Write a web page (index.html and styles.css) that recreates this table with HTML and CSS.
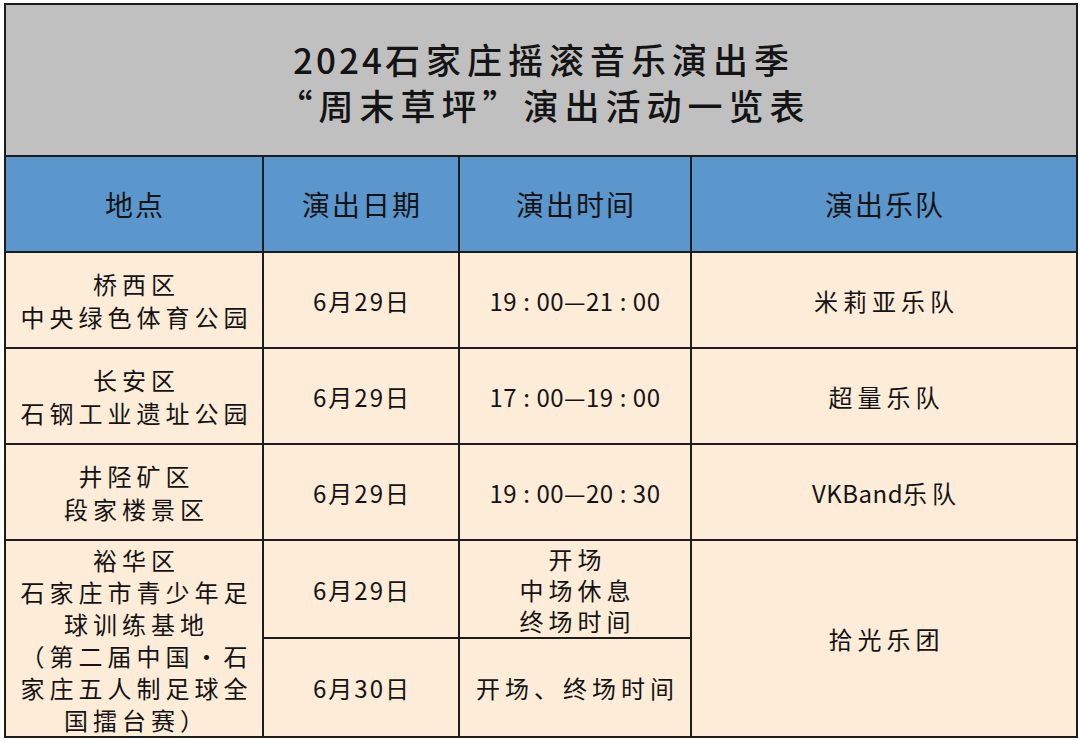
FILE: index.html
```html
<!DOCTYPE html>
<html lang="zh-CN">
<head>
<meta charset="utf-8">
<title>2024石家庄摇滚音乐演出季</title>
<link rel="stylesheet" href="styles.css">
</head>
<body>
<div class="sheet">
  <div class="cell title"><div><span class="num">2024</span>石家庄摇滚音乐演出季<br>“周末草坪”演出活动一览表</div></div>

  <div class="cell head">地点</div>
  <div class="cell head">演出日期</div>
  <div class="cell head">演出时间</div>
  <div class="cell head">演出乐队</div>

  <div class="cell loc">桥西区<br>中央绿色体育公园</div>
  <div class="cell date">6月29日</div>
  <div class="cell time">19<span class="colon">:</span>00—21<span class="colon">:</span>00</div>
  <div class="cell band">米莉亚乐队</div>

  <div class="cell loc">长安区<br>石钢工业遗址公园</div>
  <div class="cell date">6月29日</div>
  <div class="cell time">17<span class="colon">:</span>00—19<span class="colon">:</span>00</div>
  <div class="cell band">超量乐队</div>

  <div class="cell loc">井陉矿区<br>段家楼景区</div>
  <div class="cell date">6月29日</div>
  <div class="cell time">19<span class="colon">:</span>00—20<span class="colon">:</span>30</div>
  <div class="cell band"><span class="latin">VKBand</span>乐队</div>

  <div class="cell loc loc-tall">裕华区<br>石家庄市青少年足<br>球训练基地<br>（第二届中国·石<br>家庄五人制足球全<br>国擂台赛）</div>
  <div class="cell date">6月29日</div>
  <div class="cell note note-multi">开场<br>中场休息<br>终场时间</div>
  <div class="cell band band-tall">拾光乐团</div>

  <div class="cell date">6月30日</div>
  <div class="cell note">开场、终场时间</div>
</div>
</body>
</html>
```

FILE: styles.css
```css
html, body {
  margin: 0;
  padding: 0;
  background: #ffffff;
}

body {
  font-family: "Noto Sans CJK SC", "Noto Sans", sans-serif;
  color: #141414;
}

.sheet {
  margin: 3px 0 0 4px;
  width: 1070px;
  display: grid;
  grid-template-columns: 256px 194px 230px 384px;
  grid-template-rows: 150px 94px 94px 94px 94px 96px 97px;
  gap: 2px;
  padding: 2px;
  background: #1c1c1c;
}

.cell {
  background: #fdecd8;
  display: flex;
  align-items: center;
  justify-content: center;
  text-align: center;
  font-size: 24px;
  line-height: 33px;
  overflow: hidden;
}

.title {
  grid-column: 1 / 5;
  background: #c0c0c0;
  font-size: 35px;
  line-height: 46px;
  font-weight: 500;
  letter-spacing: 6px;
  padding-left: 6px;
  padding-top: 3px;
}

.title .num {
  letter-spacing: 3px;
}

.head {
  background: #5b97cc;
  font-size: 28px;
  letter-spacing: 2px;
  padding-left: 2px;
}

.loc {
  letter-spacing: 5px;
  padding-left: 5px;
}

.loc-tall {
  grid-row: span 2;
  line-height: 32px;
  padding-top: 2px;
}

.date {
  letter-spacing: 2px;
  padding-left: 2px;
}

.time {
  letter-spacing: 0.5px;
}

.colon {
  padding: 0 6px;
}

.band {
  letter-spacing: 5px;
  padding-left: 5px;
}

.latin {
  letter-spacing: 0.5px;
}

.band-tall {
  grid-row: span 2;
}

.note {
  letter-spacing: 5px;
  padding-left: 5px;
}

.note-multi {
  line-height: 31px;
}
```
